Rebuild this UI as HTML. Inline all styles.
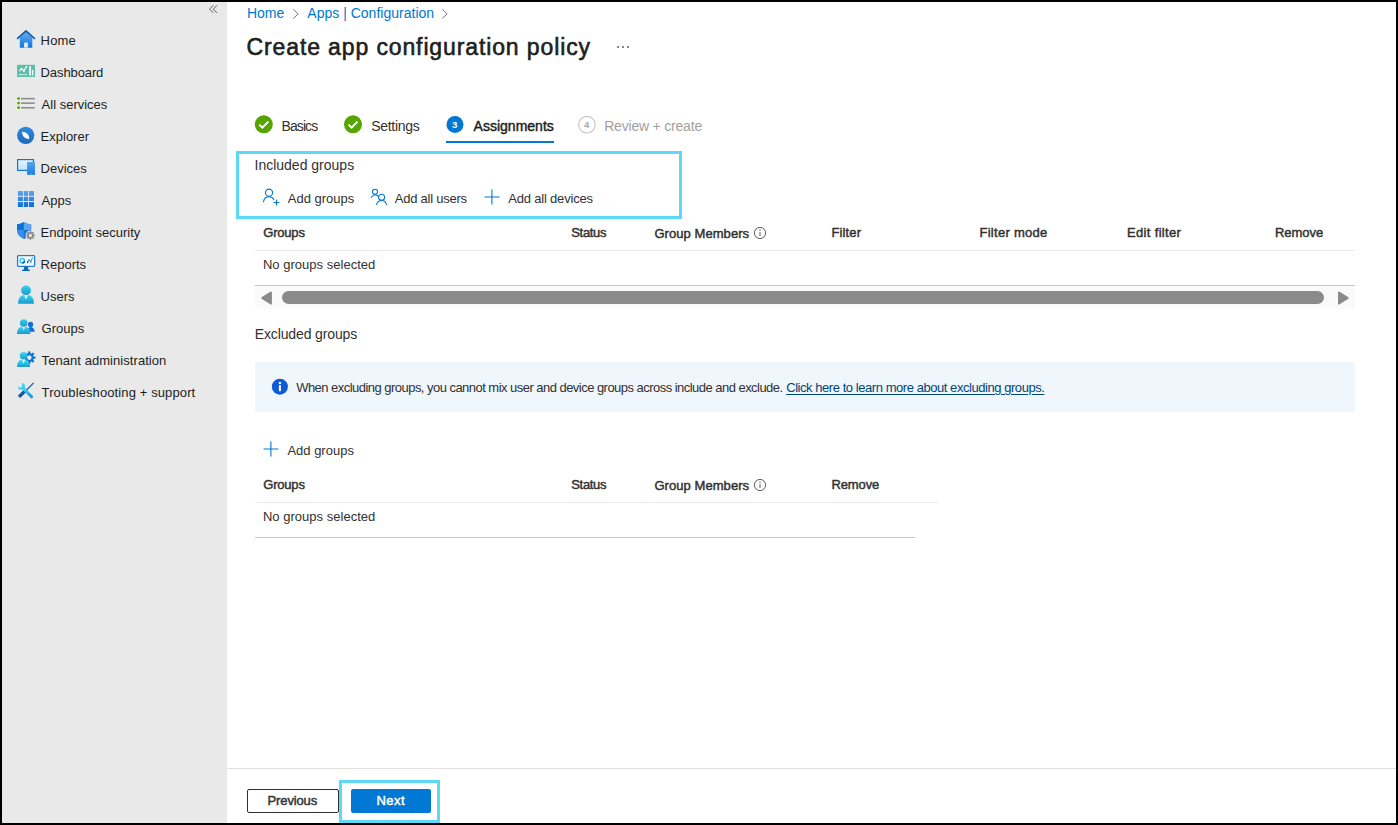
<!DOCTYPE html>
<html><head><meta charset="utf-8"><style>
html,body{margin:0;padding:0;}
body{width:1398px;height:825px;background:#000;position:relative;overflow:hidden;font-family:"Liberation Sans",sans-serif;}
.t{position:absolute;white-space:nowrap;}
.a{position:absolute;}
</style></head><body>
<!-- panels -->
<div class="a" style="left:2px;top:2px;width:225px;height:821px;background:#e9e9e9"></div>
<div class="a" style="left:227px;top:2px;width:1169px;height:821px;background:#fff"></div>
<!-- collapse chevrons -->
<svg class="a" style="left:205px;top:2px" width="16" height="14" viewBox="0 0 16 14"><path d="M8.3 3.3 L4.6 7.1 L8.3 10.9 M12 3.3 L8.3 7.1 L12 10.9" fill="none" stroke="#605e5c" stroke-width="1"/></svg>
<svg class="a" style="left:290px;top:7px" width="12" height="14" viewBox="0 0 12 14"><path d="M3.3 2.2 L8.2 6.9 L3.3 11.4" fill="none" stroke="#777" stroke-width="1"/></svg>
<svg class="a" style="left:438.6px;top:7px" width="12" height="14" viewBox="0 0 12 14"><path d="M3.3 2.2 L8.2 6.9 L3.3 11.4" fill="none" stroke="#777" stroke-width="1"/></svg>
<!-- footer divider -->
<div class="a" style="left:227px;top:768px;width:1169px;height:1px;background:#e1dfdd"></div>
<!-- tabs -->
<svg class="a" style="left:254px;top:115px" width="20" height="20" viewBox="0 0 20 20"><circle cx="9.8" cy="9.3" r="9" fill="#57a300"/><path d="M5.3 9.6 L8.4 12.6 L14.3 6.6" fill="none" stroke="#fff" stroke-width="2"/></svg>
<svg class="a" style="left:343px;top:115px" width="20" height="20" viewBox="0 0 20 20"><circle cx="10" cy="9.3" r="9" fill="#57a300"/><path d="M5.5 9.6 L8.6 12.6 L14.5 6.6" fill="none" stroke="#fff" stroke-width="2"/></svg>
<svg class="a" style="left:445px;top:115px" width="20" height="20" viewBox="0 0 20 20"><circle cx="10" cy="9.4" r="8.5" fill="#0078d4"/><text x="9.6" y="13" text-anchor="middle" font-family="Liberation Sans" font-size="9.6" font-weight="700" fill="#fff">3</text></svg>
<svg class="a" style="left:576px;top:115px" width="21" height="20" viewBox="0 0 21 20"><circle cx="10.9" cy="9.65" r="8.3" fill="none" stroke="#c2c2c2" stroke-width="1.1"/><text x="10.6" y="13" text-anchor="middle" font-family="Liberation Sans" font-size="9.6" font-weight="700" fill="#a8a8a8">4</text></svg>
<div class="a" style="left:446px;top:141px;width:108px;height:2px;background:#0078d4"></div>
<!-- included cyan box -->
<div class="a" style="left:236px;top:151px;width:440px;height:62px;border:3px solid #5bd9f7"></div>
<!-- add groups icons -->
<svg class="a" style="left:262px;top:188px" width="18" height="18" viewBox="0 0 18 18"><circle cx="7.05" cy="4.7" r="3.55" fill="none" stroke="#0078d4" stroke-width="1.1"/><path d="M1.5 13.8 C2 10.6 4.3 8.8 7 8.8 C9.1 8.8 10.9 9.8 11.9 11.6" fill="none" stroke="#0078d4" stroke-width="1.1" stroke-linecap="round"/><path d="M14.5 12 V17 M12 14.5 H17" stroke="#0078d4" stroke-width="1.1" stroke-linecap="round"/></svg>
<svg class="a" style="left:370px;top:188px" width="18" height="18" viewBox="0 0 18 18"><circle cx="5" cy="3.85" r="2.55" fill="none" stroke="#0078d4" stroke-width="1.1"/><path d="M1.4 9.4 C2.2 7.6 3.5 6.75 5 6.75 C6.5 6.75 7.7 7.5 8.4 8.7" fill="none" stroke="#0078d4" stroke-width="1.1" stroke-linecap="round"/><circle cx="11.6" cy="9.2" r="3" fill="none" stroke="#0078d4" stroke-width="1.1"/><path d="M6.5 16.4 C7.3 14 9 12.5 11.6 12.5 C14.2 12.5 15.8 14 16.5 16.4" fill="none" stroke="#0078d4" stroke-width="1.1" stroke-linecap="round"/></svg>
<svg class="a" style="left:484px;top:189px" width="16" height="16" viewBox="0 0 16 16"><path d="M7.9 0.5 V15.5 M0.5 8 H15.5" stroke="#0078d4" stroke-width="1.1"/></svg>
<!-- table1 -->
<div class="a" style="left:255px;top:250px;width:1100px;height:1px;background:#edebe9"></div>
<div class="a" style="left:255px;top:285px;width:1100px;height:1px;background:#c8c6c4"></div>
<div class="a" style="left:255px;top:286px;width:1100px;height:23px;background:#fafafa"></div>
<svg class="a" style="left:260px;top:290px" width="14" height="16" viewBox="0 0 14 16"><path d="M11.1 2.2 L2 8 L11.1 13.8 Z" fill="#8a8a8a" stroke="#8a8a8a" stroke-width="1.6" stroke-linejoin="round"/></svg>
<div class="a" style="left:282px;top:291px;width:1042px;height:13px;border-radius:6.5px;background:#8a8a8a"></div>
<svg class="a" style="left:1336px;top:290px" width="14" height="16" viewBox="0 0 14 16"><path d="M2.8 2.2 L12 8 L2.8 13.8 Z" fill="#8a8a8a" stroke="#8a8a8a" stroke-width="1.6" stroke-linejoin="round"/></svg>
<svg class="a" style="left:753px;top:226px" width="14" height="14" viewBox="0 0 14 14"><circle cx="7" cy="7" r="5.6" fill="none" stroke="#605e5c" stroke-width="1"/><path d="M7 6 V10" stroke="#605e5c" stroke-width="1"/><circle cx="7" cy="4.3" r="0.7" fill="#605e5c"/></svg>
<!-- info bar -->
<div class="a" style="left:255px;top:362px;width:1100px;height:50px;background:#eff6fc;border-radius:2px"></div>
<svg class="a" style="left:271px;top:378px" width="18" height="18" viewBox="0 0 18 18"><circle cx="8.9" cy="8.7" r="8" fill="#0f5ad8"/><rect x="7.9" y="7.2" width="2" height="6" fill="#fff"/><circle cx="8.9" cy="5" r="1.2" fill="#fff"/></svg>
<!-- excluded add -->
<svg class="a" style="left:263px;top:441px" width="16" height="16" viewBox="0 0 16 16"><path d="M7.9 0.5 V15.5 M0.5 8 H15.5" stroke="#0078d4" stroke-width="1.1"/></svg>
<!-- table2 -->
<div class="a" style="left:255px;top:502px;width:683px;height:1px;background:#edebe9"></div>
<div class="a" style="left:255px;top:537px;width:660px;height:1px;background:#c8c6c4"></div>
<svg class="a" style="left:753px;top:478px" width="14" height="14" viewBox="0 0 14 14"><circle cx="7" cy="7" r="5.6" fill="none" stroke="#605e5c" stroke-width="1"/><path d="M7 6 V10" stroke="#605e5c" stroke-width="1"/><circle cx="7" cy="4.3" r="0.7" fill="#605e5c"/></svg>
<!-- title dots -->
<div class="a" style="left:617px;top:46px;width:2px;height:2px;background:#8a8886"></div>
<div class="a" style="left:622px;top:46px;width:2px;height:2px;background:#8a8886"></div>
<div class="a" style="left:627px;top:46px;width:2px;height:2px;background:#8a8886"></div>
<!-- footer buttons -->
<div class="a" style="left:247px;top:789px;width:90px;height:22px;border:1px solid #323130;border-radius:2px;background:#fff"></div>
<div class="a" style="left:351px;top:789px;width:80px;height:24px;border-radius:2px;background:#0078d4"></div>
<div class="a" style="left:339px;top:780px;width:95px;height:37px;border:3px solid #5bd9f7"></div>
<!-- black border bottom overlay -->
<div class="a" style="left:0;top:823px;width:1398px;height:2px;background:#000"></div>
<!-- sidebar icons -->
<svg class="a" style="left:14px;top:27px" width="26" height="26" viewBox="0 0 26 26"><defs><linearGradient id="gh" x1="0" y1="0" x2="0" y2="1"><stop offset="0" stop-color="#6aaaf2"/><stop offset="1" stop-color="#0f78d9"/></linearGradient></defs><path d="M5.8 10.8 L12 5 L18.3 10.8 V20.8 H5.8 Z" fill="url(#gh)"/><rect x="10.1" y="15.6" width="3.8" height="5" fill="#e6edf5"/><path d="M3.6 11.4 L12 4 L20.4 11.4" fill="none" stroke="#0d5fb3" stroke-width="1.7" stroke-linecap="round" stroke-linejoin="round"/></svg>
<svg class="a" style="left:14px;top:59px" width="26" height="26" viewBox="0 0 26 26"><rect x="3" y="5.8" width="18" height="12.2" fill="#5dbfad"/><path d="M5.3 12.2 L7.6 9.6 L9.9 11.9 L12.4 8" fill="none" stroke="#fff" stroke-width="1.2"/><circle cx="12.4" cy="8" r="0.9" fill="#fff"/><circle cx="9.9" cy="11.9" r="1" fill="#fff"/><circle cx="7.6" cy="9.6" r="0.9" fill="#fff"/><rect x="4.7" y="15" width="8.3" height="1.2" fill="#bfe6df"/><rect x="15.2" y="7.2" width="1.8" height="9.3" fill="#f0faf8"/><rect x="18" y="11" width="1.4" height="5.5" fill="#f0faf8"/></svg>
<svg class="a" style="left:14px;top:94px" width="26" height="26" viewBox="0 0 26 26"><g fill="#57a300"><circle cx="4.6" cy="4.6" r="1.4"/><circle cx="4.6" cy="9.1" r="1.4"/><circle cx="4.6" cy="13.7" r="1.4"/></g><g fill="#8a8a8a"><rect x="7" y="3.9" width="13.8" height="1.5"/><rect x="7" y="8.4" width="13.8" height="1.5"/><rect x="7" y="13" width="13.8" height="1.5"/></g></svg>
<svg class="a" style="left:14px;top:124px" width="26" height="26" viewBox="0 0 26 26"><defs><linearGradient id="ge" x1="0" y1="0" x2="0" y2="1"><stop offset="0" stop-color="#2a8ae0"/><stop offset="1" stop-color="#1f6bbf"/></linearGradient></defs><circle cx="11.7" cy="11.3" r="8.6" fill="url(#ge)"/><path d="M8 7.8 Q15.1 8.05 15.4 15.1 Q8.3 14.85 8 7.8 Z" fill="#fff"/></svg>
<svg class="a" style="left:14px;top:156px" width="26" height="26" viewBox="0 0 26 26"><defs><linearGradient id="gd" x1="0" y1="0" x2="0" y2="1"><stop offset="0" stop-color="#e6f6fd"/><stop offset="1" stop-color="#c3e2f7"/></linearGradient><linearGradient id="gp" x1="0" y1="0" x2="0" y2="1"><stop offset="0" stop-color="#5aa2ec"/><stop offset="1" stop-color="#1a7ee0"/></linearGradient></defs><rect x="3.6" y="3.6" width="15.8" height="10.8" fill="url(#gd)" stroke="#0a78d6" stroke-width="1.2"/><rect x="13.1" y="6" width="7.9" height="12.9" fill="url(#gp)"/><rect x="16.6" y="17.4" width="0.9" height="1.5" fill="#9cc8f2"/></svg>
<svg class="a" style="left:14px;top:188px" width="26" height="26" viewBox="0 0 26 26"><defs><linearGradient id="ga" x1="0" y1="0" x2="0" y2="1"><stop offset="0" stop-color="#5fa3ef"/><stop offset="1" stop-color="#0a6fd8"/></linearGradient></defs><g fill="url(#ga)"><path d="M3.9 3 H8.9 V7.8 H3.9 Z M9.8 3 H14 V7.8 H9.8 Z M14.9 3 H20 V7.8 H14.9 Z M3.9 8.8 H8.9 V13 H3.9 Z M9.8 8.8 H14 V13 H9.8 Z M14.9 8.8 H20 V13 H14.9 Z M3.9 13.9 H8.9 V18.9 H3.9 Z M9.8 13.9 H14 V18.9 H9.8 Z M14.9 13.9 H20 V18.9 H14.9 Z"/></g></svg>
<svg class="a" style="left:14px;top:220px" width="26" height="26" viewBox="0 0 26 26"><path d="M3 4.2 C6 4 8 3.2 9.9 2 C11.8 3.2 14 4 17.2 4.2 V10.5 C17.2 14.3 13.8 17.3 9.9 19 C6 17.3 3 14.3 3 10.5 Z" fill="#3a8ee6"/><path d="M3 4.2 C6 4 8 3.2 9.9 2 V10 H3 Z" fill="#0a74d6"/><path d="M9.9 10 H17.2 C17.2 14.3 13.8 17.3 9.9 19 Z" fill="#0f78d9"/><path d="M9.9 2 C11.8 3.2 14 4 17.2 4.2 V10 H9.9 Z" fill="#5fa3ee"/><g transform="translate(16.4 15.4)"><circle r="4.9" fill="#e9e9e9"/><circle r="3.3" fill="#8a8a8a"/><g fill="#8a8a8a"><rect x="-0.75" y="-4.5" width="1.5" height="9"/><rect x="-4.5" y="-0.75" width="9" height="1.5"/><rect x="-0.75" y="-4.5" width="1.5" height="9" transform="rotate(45)"/><rect x="-0.75" y="-4.5" width="1.5" height="9" transform="rotate(-45)"/></g><circle r="1.6" fill="#e9e9e9"/></g></svg>
<svg class="a" style="left:14px;top:252px" width="26" height="26" viewBox="0 0 26 26"><rect x="3.6" y="3.6" width="17" height="10.8" rx="0.8" fill="#fff" stroke="#1a7fd8" stroke-width="1.3"/><path d="M10.2 14.8 H13.9 L14.4 18 H9.7 Z" fill="#0c64b8"/><rect x="8" y="17.8" width="8" height="1.3" rx="0.6" fill="#0c64b8"/><circle cx="8.3" cy="8.8" r="2.2" fill="none" stroke="#35c6f2" stroke-width="1.5"/><path d="M10.5 8.8 A2.2 2.2 0 0 1 8.3 11" fill="none" stroke="#0c5fb0" stroke-width="1.5"/><path d="M13.2 11 L15 7.5 L16.6 10 L18.6 5.5" fill="none" stroke="#1a8fe0" stroke-width="1"/><rect x="13" y="9" width="1.2" height="2.3" fill="#0c5fb0"/><rect x="16.2" y="8.5" width="1.2" height="2.8" fill="#5a8ec0"/></svg>
<svg class="a" style="left:14px;top:284px" width="26" height="26" viewBox="0 0 26 26"><defs><linearGradient id="gu" x1="0" y1="0" x2="0" y2="1"><stop offset="0" stop-color="#36d0f4"/><stop offset="1" stop-color="#1a9bcc"/></linearGradient></defs><circle cx="12" cy="6.4" r="4.9" fill="url(#gu)"/><path d="M4 19.8 C4 14.5 6.5 11 10 11 H14 C17.5 11 20 14.5 20 19.8 Z" fill="url(#gu)"/><path d="M10 11 H14 L12 15.7 Z" fill="#dff6fd"/></svg>
<svg class="a" style="left:14px;top:316px" width="26" height="26" viewBox="0 0 26 26"><defs><linearGradient id="gg" x1="0" y1="0" x2="0" y2="1"><stop offset="0" stop-color="#36d0f4"/><stop offset="1" stop-color="#1a9bcc"/></linearGradient></defs><circle cx="16.6" cy="8.4" r="2.6" fill="#0a72d8"/><path d="M13.5 15.8 C13.8 12.8 14.9 11 16.6 11 C18.6 11 20.5 12.8 20.8 15.8 Z" fill="#0a72d8"/><circle cx="9.7" cy="7" r="3.8" fill="url(#gg)"/><path d="M3 18 C3 13.5 5 11 8 11 H11.4 C14.4 11 16.4 13.5 16.4 18 Z" fill="url(#gg)"/><path d="M8.2 11 H11.2 L9.7 14.6 Z" fill="#dff6fd"/></svg>
<svg class="a" style="left:14px;top:348px" width="26" height="26" viewBox="0 0 26 26"><defs><linearGradient id="gt" x1="0" y1="0" x2="0" y2="1"><stop offset="0" stop-color="#44dcf8"/><stop offset="1" stop-color="#1a9bcc"/></linearGradient></defs><g transform="translate(15.3 9.6)"><circle r="4.5" fill="#0a74d8"/><g fill="#0a74d8"><rect x="-1.1" y="-6.2" width="2.2" height="12.4"/><rect x="-6.2" y="-1.1" width="12.4" height="2.2"/><rect x="-1.1" y="-6.2" width="2.2" height="12.4" transform="rotate(45)"/><rect x="-1.1" y="-6.2" width="2.2" height="12.4" transform="rotate(-45)"/></g><circle r="2.3" fill="#e9e9e9"/></g><circle cx="9.5" cy="7.7" r="3.7" fill="url(#gt)"/><path d="M3 19 C3 14.5 5 11.8 8 11.8 H11 C14 11.8 16 14.5 16 19 Z" fill="url(#gt)"/><path d="M8 11.8 H11 L9.5 15.8 Z" fill="#e6fbff"/></svg>
<svg class="a" style="left:14px;top:380px" width="26" height="26" viewBox="0 0 26 26"><defs><linearGradient id="gw" x1="0" y1="0" x2="1" y2="1"><stop offset="0" stop-color="#3ad4f6"/><stop offset="1" stop-color="#1a96c8"/></linearGradient></defs><path d="M19.4 3.1 L12.3 10.3" stroke="#0c6ab8" stroke-width="1.3" stroke-linecap="round"/><path d="M10.6 11.4 L5 16.9" stroke="#0a5aa8" stroke-width="3.4"/><path d="M10.2 9.3 L17.6 16.8" stroke="url(#gw)" stroke-width="3" stroke-linecap="round"/><path d="M7.4 3.3 C9.6 2.7 11.4 4.5 10.8 6.6 L11.8 9.2 L9.3 10.6 L7.2 9.6 C5.3 10.1 3.6 8.6 4 6.3 L5.7 7.8 L7.5 7.1 L8.2 5 Z" fill="#3ad0f4"/></svg>


<div class="t" style="left:40.60px;top:34.00px;font-size:13px;line-height:13px;font-weight:400;color:#201f1e;letter-spacing:0.184px;">Home</div>
<div class="t" style="left:40.60px;top:66.00px;font-size:13px;line-height:13px;font-weight:400;color:#201f1e;letter-spacing:-0.108px;">Dashboard</div>
<div class="t" style="left:41.60px;top:98.00px;font-size:13px;line-height:13px;font-weight:400;color:#201f1e;letter-spacing:0.000px;">All services</div>
<div class="t" style="left:40.60px;top:130.00px;font-size:13px;line-height:13px;font-weight:400;color:#201f1e;letter-spacing:0.000px;">Explorer</div>
<div class="t" style="left:40.60px;top:162.00px;font-size:13px;line-height:13px;font-weight:400;color:#201f1e;letter-spacing:0.000px;">Devices</div>
<div class="t" style="left:41.60px;top:194.00px;font-size:13px;line-height:13px;font-weight:400;color:#201f1e;letter-spacing:0.000px;">Apps</div>
<div class="t" style="left:40.60px;top:226.00px;font-size:13px;line-height:13px;font-weight:400;color:#201f1e;letter-spacing:0.000px;">Endpoint security</div>
<div class="t" style="left:40.60px;top:258.00px;font-size:13px;line-height:13px;font-weight:400;color:#201f1e;letter-spacing:0.000px;">Reports</div>
<div class="t" style="left:40.60px;top:290.00px;font-size:13px;line-height:13px;font-weight:400;color:#201f1e;letter-spacing:0.000px;">Users</div>
<div class="t" style="left:41.60px;top:322.00px;font-size:13px;line-height:13px;font-weight:400;color:#201f1e;letter-spacing:0.000px;">Groups</div>
<div class="t" style="left:41.60px;top:354.00px;font-size:13px;line-height:13px;font-weight:400;color:#201f1e;letter-spacing:0.058px;">Tenant administration</div>
<div class="t" style="left:41.60px;top:386.00px;font-size:13px;line-height:13px;font-weight:400;color:#201f1e;letter-spacing:0.112px;">Troubleshooting + support</div>
<div class="t" style="left:246.90px;top:6.10px;font-size:14px;line-height:14px;font-weight:400;color:#0078d4;letter-spacing:-0.020px;">Home</div>
<div class="t" style="left:307.30px;top:6.10px;font-size:14px;line-height:14px;font-weight:400;color:#0078d4;letter-spacing:0.010px;">Apps | Configuration</div>
<div class="t" style="left:246.50px;top:35.90px;font-size:23px;line-height:23px;font-weight:400;color:#201f1e;letter-spacing:0.881px;-webkit-text-stroke:0.6px #201f1e;">Create app configuration policy</div>
<div class="t" style="left:281.50px;top:119.00px;font-size:14px;line-height:14px;font-weight:400;color:#323130;letter-spacing:-0.907px;">Basics</div>
<div class="t" style="left:371.20px;top:119.00px;font-size:14px;line-height:14px;font-weight:400;color:#323130;letter-spacing:-0.284px;">Settings</div>
<div class="t" style="left:473.60px;top:119.00px;font-size:14px;line-height:14px;font-weight:400;color:#201f1e;letter-spacing:0.006px;-webkit-text-stroke:0.45px #201f1e;">Assignments</div>
<div class="t" style="left:604.20px;top:119.00px;font-size:14px;line-height:14px;font-weight:400;color:#a19f9d;letter-spacing:-0.199px;">Review + create</div>
<div class="t" style="left:254.50px;top:158.20px;font-size:14px;line-height:14px;font-weight:400;color:#323130;letter-spacing:0.000px;">Included groups</div>
<div class="t" style="left:287.80px;top:191.50px;font-size:13px;line-height:13px;font-weight:400;color:#323130;letter-spacing:0.000px;">Add groups</div>
<div class="t" style="left:394.80px;top:191.50px;font-size:13px;line-height:13px;font-weight:400;color:#323130;letter-spacing:-0.246px;">Add all users</div>
<div class="t" style="left:508.30px;top:191.50px;font-size:13px;line-height:13px;font-weight:400;color:#323130;letter-spacing:-0.196px;">Add all devices</div>
<div class="t" style="left:263.30px;top:226.00px;font-size:13px;line-height:13px;font-weight:400;color:#323130;letter-spacing:-0.206px;-webkit-text-stroke:0.45px #323130;">Groups</div>
<div class="t" style="left:571.30px;top:226.00px;font-size:13px;line-height:13px;font-weight:400;color:#323130;letter-spacing:-0.351px;-webkit-text-stroke:0.45px #323130;">Status</div>
<div class="t" style="left:654.40px;top:226.70px;font-size:13px;line-height:13px;font-weight:400;color:#323130;letter-spacing:0.065px;-webkit-text-stroke:0.45px #323130;">Group Members</div>
<div class="t" style="left:831.40px;top:226.00px;font-size:13px;line-height:13px;font-weight:400;color:#323130;letter-spacing:0.148px;-webkit-text-stroke:0.45px #323130;">Filter</div>
<div class="t" style="left:979.50px;top:226.00px;font-size:13px;line-height:13px;font-weight:400;color:#323130;letter-spacing:0.271px;-webkit-text-stroke:0.45px #323130;">Filter mode</div>
<div class="t" style="left:1127.00px;top:226.00px;font-size:13px;line-height:13px;font-weight:400;color:#323130;letter-spacing:0.336px;-webkit-text-stroke:0.45px #323130;">Edit filter</div>
<div class="t" style="left:1275.00px;top:226.00px;font-size:13px;line-height:13px;font-weight:400;color:#323130;letter-spacing:-0.035px;-webkit-text-stroke:0.45px #323130;">Remove</div>
<div class="t" style="left:262.90px;top:257.90px;font-size:13px;line-height:13px;font-weight:400;color:#323130;letter-spacing:0.025px;">No groups selected</div>
<div class="t" style="left:254.70px;top:326.90px;font-size:14px;line-height:14px;font-weight:400;color:#323130;letter-spacing:-0.121px;">Excluded groups</div>
<div class="t" style="left:296.20px;top:380.80px;font-size:13px;line-height:13px;font-weight:400;color:#323130;letter-spacing:-0.533px;">When excluding groups, you cannot mix user and device groups across include and exclude.</div>
<div class="t" style="left:786.20px;top:380.80px;font-size:13px;line-height:13px;font-weight:400;color:#004578;letter-spacing:-0.446px;text-decoration:underline;text-underline-offset:2px;">Click here to learn more about excluding groups.</div>
<div class="t" style="left:287.40px;top:444.10px;font-size:13px;line-height:13px;font-weight:400;color:#323130;letter-spacing:0.000px;">Add groups</div>
<div class="t" style="left:263.30px;top:478.20px;font-size:13px;line-height:13px;font-weight:400;color:#323130;letter-spacing:-0.206px;-webkit-text-stroke:0.45px #323130;">Groups</div>
<div class="t" style="left:571.30px;top:478.20px;font-size:13px;line-height:13px;font-weight:400;color:#323130;letter-spacing:-0.351px;-webkit-text-stroke:0.45px #323130;">Status</div>
<div class="t" style="left:654.40px;top:478.70px;font-size:13px;line-height:13px;font-weight:400;color:#323130;letter-spacing:0.065px;-webkit-text-stroke:0.45px #323130;">Group Members</div>
<div class="t" style="left:831.50px;top:478.20px;font-size:13px;line-height:13px;font-weight:400;color:#323130;letter-spacing:-0.135px;-webkit-text-stroke:0.45px #323130;">Remove</div>
<div class="t" style="left:262.90px;top:509.90px;font-size:13px;line-height:13px;font-weight:400;color:#323130;letter-spacing:0.025px;">No groups selected</div>
<div class="t" style="left:267.60px;top:794.20px;font-size:13px;line-height:13px;font-weight:400;color:#323130;letter-spacing:-0.140px;-webkit-text-stroke:0.45px #323130;">Previous</div>
<div class="t" style="left:376.50px;top:794.20px;font-size:13px;line-height:13px;font-weight:400;color:#ffffff;letter-spacing:0.461px;-webkit-text-stroke:0.45px #ffffff;">Next</div>
</body></html>
